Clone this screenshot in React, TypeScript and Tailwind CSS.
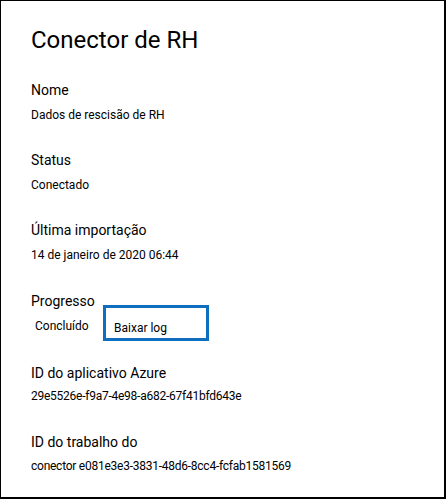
const font = { fontFamily: "Roboto, 'Liberation Sans', sans-serif" }

function Field({ label, value, gap = "mt-[7px]", tight = false }: { label: string; value: string; gap?: string; tight?: boolean }) {
	return (
		<div className="flex flex-col">
			<div className="text-[14px] leading-[20px] text-black">{label}</div>
			<div className={`${gap} text-[12px] leading-[16px] text-black ${tight ? "tracking-[-0.25px]" : ""}`}>{value}</div>
		</div>
	)
}

export default function App() {
	return (
		<div
			className="w-[446px] h-[499px] bg-white border-black border-l border-t border-r-2 border-b-2 pl-[30px] pt-[25px]"
			style={font}
		>
			<h1 className="text-[24px] leading-[28px] text-black">Conector de RH</h1>

			<div className="mt-[26px] flex flex-col gap-[27px]">
				<Field label="Nome" value="Dados de rescisão de RH" />
				<Field label="Status" value="Conectado" />
				<Field label="Última importação" value="14 de janeiro de 2020 06:44" />
			</div>

			<div className="mt-[28px]">
				<div className="text-[14px] leading-[20px] text-black">Progresso</div>
				<div className="-mt-[6px] flex items-start">
					<span className="w-[72px] pl-[4px] pt-[13px] text-[12px] leading-[16px] text-black">Concluído</span>
					<button
						type="button"
						className="w-[106px] h-[36px] border-[3px] border-[#106ebe] pl-[8px] pt-[10px] text-left text-[12px] leading-[16px] text-black"
					>
						Baixar log
					</button>
				</div>
			</div>

			<div className="mt-[22px] flex flex-col gap-[28px]">
				<Field label="ID do aplicativo Azure" value="29e5526e-f9a7-4e98-a682-67f41bfd643e" gap="mt-[5px]" tight />
				<Field label="ID do trabalho do" value="conector e081e3e3-3831-48d6-8cc4-fcfab1581569" gap="mt-[6px]" tight />
			</div>
		</div>
	)
}
